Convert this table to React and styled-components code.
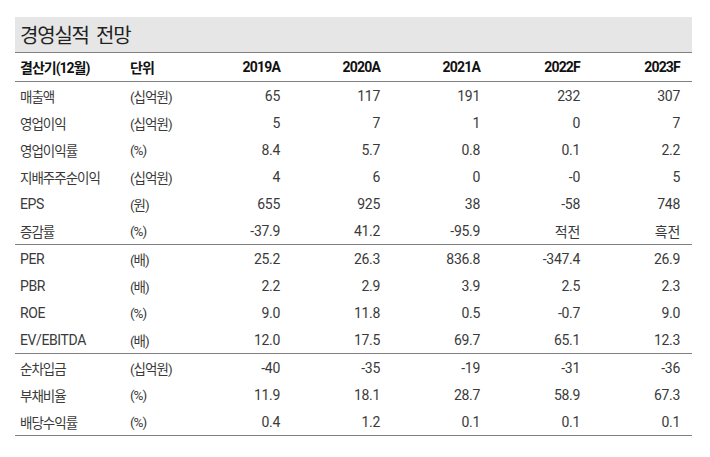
import styled, { createGlobalStyle } from "styled-components";

const GlobalStyle = createGlobalStyle`
  body {
    margin: 0;
    background: #ffffff;
    font-family: "Roboto", "Noto Sans CJK KR", sans-serif;
  }
`;

const header = ["2019A", "2020A", "2021A", "2022F", "2023F"];

const sections = [
  [
    ["매출액", "(십억원)", ["65", "117", "191", "232", "307"]],
    ["영업이익", "(십억원)", ["5", "7", "1", "0", "7"]],
    ["영업이익률", "(%)", ["8.4", "5.7", "0.8", "0.1", "2.2"]],
    ["지배주주순이익", "(십억원)", ["4", "6", "0", "-0", "5"]],
    ["EPS", "(원)", ["655", "925", "38", "-58", "748"]],
    ["증감률", "(%)", ["-37.9", "41.2", "-95.9", "적전", "흑전"]],
  ],
  [
    ["PER", "(배)", ["25.2", "26.3", "836.8", "-347.4", "26.9"]],
    ["PBR", "(배)", ["2.2", "2.9", "3.9", "2.5", "2.3"]],
    ["ROE", "(%)", ["9.0", "11.8", "0.5", "-0.7", "9.0"]],
    ["EV/EBITDA", "(배)", ["12.0", "17.5", "69.7", "65.1", "12.3"]],
  ],
  [
    ["순차입금", "(십억원)", ["-40", "-35", "-19", "-31", "-36"]],
    ["부채비율", "(%)", ["11.9", "18.1", "28.7", "58.9", "67.3"]],
    ["배당수익률", "(%)", ["0.4", "1.2", "0.1", "0.1", "0.1"]],
  ],
];

export default function App() {
  return (
    <>
      <GlobalStyle />
      <Wrapper>
        <Title>경영실적 전망</Title>
        <HeadRow>
          <Cell $head>결산기(12월)</Cell>
          <Cell $head>단위</Cell>
          {header.map((h) => (
            <Num key={h} $head>
              {h}
            </Num>
          ))}
        </HeadRow>
        {sections.map((rows, i) => (
          <Section key={i}>
            {rows.map(([label, unit, values]) => (
              <Row key={label}>
                <Cell $latin={/^[A-Z]/.test(label)}>{label}</Cell>
                <Cell>{unit}</Cell>
                {values.map((v, j) => (
                  <Num key={j}>{v}</Num>
                ))}
              </Row>
            ))}
          </Section>
        ))}
      </Wrapper>
    </>
  );
}

const Wrapper = styled.div`
  width: 677px;
  margin: 17px 0 0 15px;
`;

const Title = styled.div`
  height: 35px;
  display: flex;
  align-items: center;
  padding-left: 5px;
  background: #e6e6e6;
  border-bottom: 1px solid #7f7f7f;
  font-family: "Noto Sans CJK KR", sans-serif;
  font-size: 20px;
  letter-spacing: -1.2px;
  word-spacing: 4px;
  color: #222;
  white-space: pre;
`;

const RowBase = styled.div`
  display: grid;
  grid-template-columns: 110px 50px repeat(5, 100px);
  align-items: center;
  padding: 0 12px 0 5px;
`;

const HeadRow = styled(RowBase)`
  height: 28px;
  border-bottom: 1px solid #7f7f7f;
`;

const Row = styled(RowBase)`
  height: 27px;
`;

const Section = styled.div`
  border-bottom: 1px solid #7f7f7f;
`;

const Cell = styled.div`
  font-size: ${(p) => (p.$head ? "14px" : p.$latin ? "14px" : "13.5px")};
  font-weight: ${(p) => (p.$head ? 700 : 400)};
  letter-spacing: ${(p) => (p.$latin ? "-0.4px" : "-1px")};
  color: ${(p) => (p.$head ? "#111" : "#3a3a3a")};
  white-space: nowrap;
`;

const Num = styled.div`
  text-align: right;
  font-size: 14px;
  font-weight: ${(p) => (p.$head ? 700 : 400)};
  letter-spacing: ${(p) => (p.$head ? "-0.8px" : "-0.3px")};
  color: ${(p) => (p.$head ? "#111" : "#3a3a3a")};
  white-space: nowrap;
`;
